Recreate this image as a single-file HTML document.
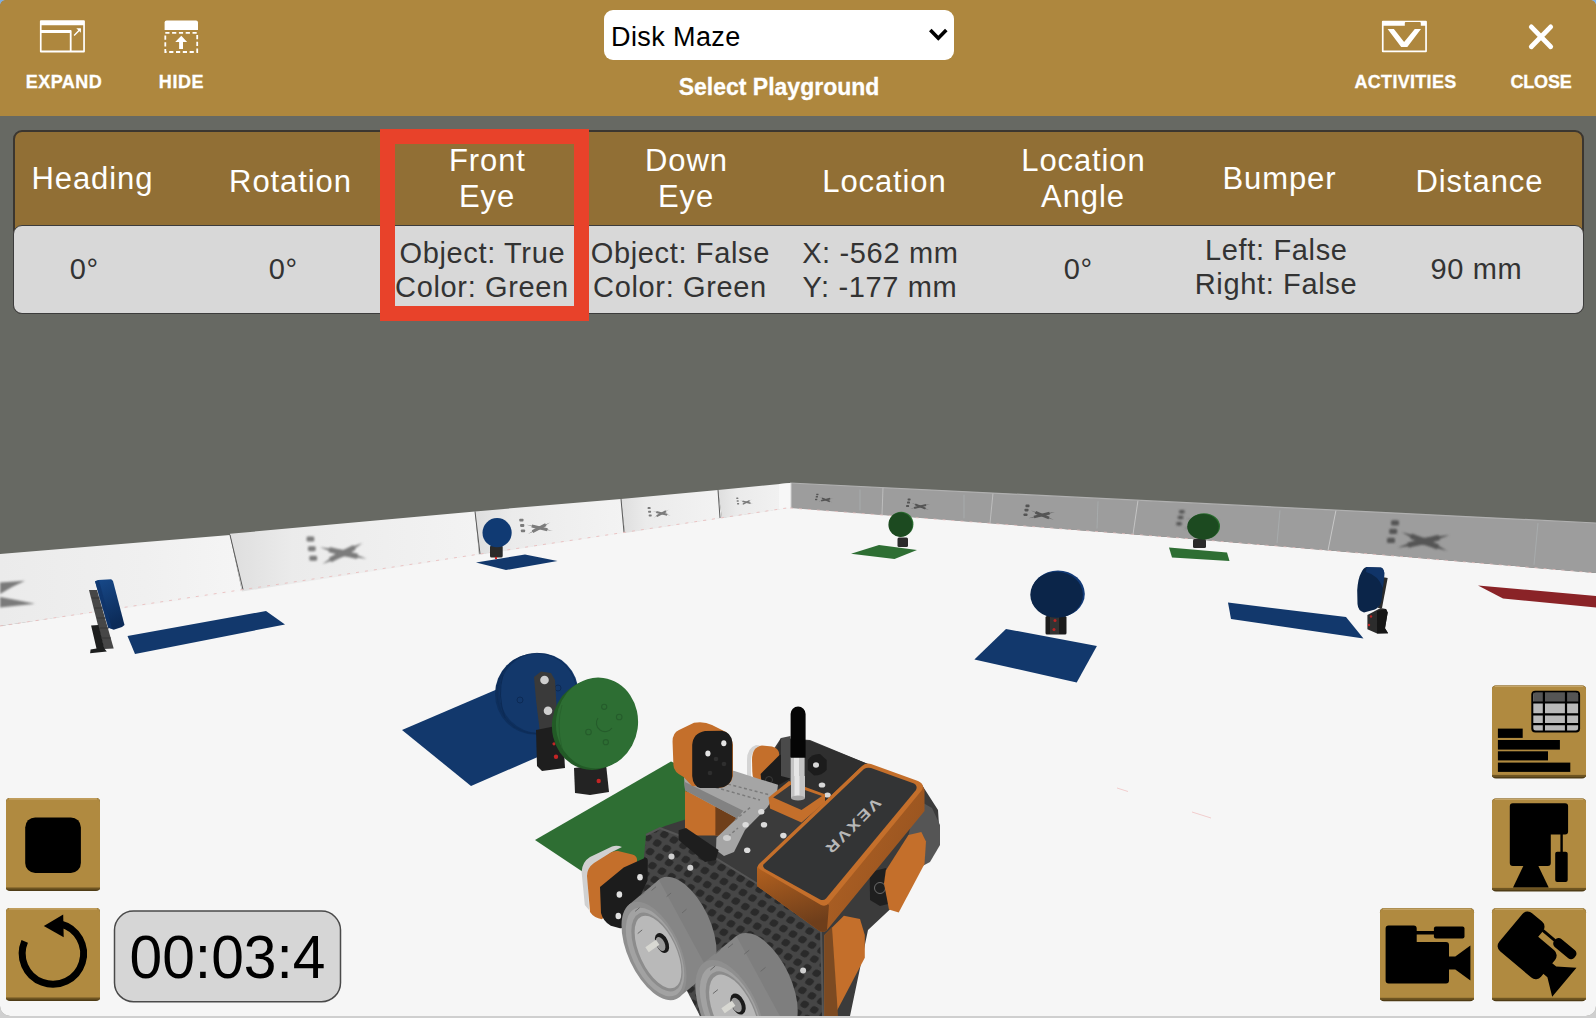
<!DOCTYPE html>
<html><head><meta charset="utf-8">
<style>
*{margin:0;padding:0;box-sizing:border-box}
html,body{width:1596px;height:1018px;overflow:hidden;background:#7eaee0;font-family:"Liberation Sans",sans-serif}
#app{position:absolute;left:0;top:0;width:1596px;height:1018px;overflow:hidden;border-radius:6px 6px 0 0;background:#cfcfcf}
#scene{position:absolute;left:0;top:0;width:1596px;height:1016px;border-radius:0 0 10px 10px;overflow:hidden;background:#f6f6f6}
#hdr{position:absolute;left:0;top:0;width:1596px;height:116px;background:#ae873e}
.lbl{position:absolute;color:#fff;font-weight:bold;font-size:18px;line-height:18px;text-align:center;white-space:nowrap;-webkit-text-stroke:0.3px #fff}
#sel{position:absolute;left:604px;top:10px;width:350px;height:50px;background:#fff;border-radius:9px}
#sel span{position:absolute;left:7px;top:11px;font-size:27px;line-height:32px;color:#000;letter-spacing:0.4px}
#tbl{position:absolute;left:13px;top:130px;width:1571px;height:184px;border:2px solid #3b3630;border-radius:9px;background:#916f35}
#th{position:absolute;left:-2px;top:92.5px;width:1571px;height:89.5px;background:#d8d8d8;border:1.8px solid #3c3c3c;border-radius:9px}
.h{position:absolute;color:#fff;font-size:31px;line-height:36px;letter-spacing:0.9px;text-indent:0.9px;text-align:center;width:200px;white-space:nowrap}
.b{position:absolute;color:#333;font-size:29px;line-height:34px;letter-spacing:0.65px;text-indent:0.65px;text-align:center;width:200px;white-space:nowrap}
.btn{position:absolute;width:94px;height:94px;border-radius:5px;background:#b08a40;box-shadow:inset 0 -5px 3px -1px #5b4419}
</style></head><body>
<div id="app">
<div id="scene">
<svg id="world" width="1596" height="1018" style="position:absolute;left:0;top:0">
<defs><filter id="bl1" x="-30%" y="-30%" width="160%" height="160%"><feGaussianBlur stdDeviation="1.3"/></filter><filter id="bl2" x="-30%" y="-30%" width="160%" height="160%"><feGaussianBlur stdDeviation="0.7"/></filter><linearGradient id="lw1" x1="0" y1="0" x2="1" y2="0"><stop offset="0" stop-color="#ebebeb"/><stop offset="0.6" stop-color="#f0f0f0"/><stop offset="1" stop-color="#f5f5f5"/></linearGradient><linearGradient id="lw2" x1="0" y1="0" x2="1" y2="0"><stop offset="0" stop-color="#dedede"/><stop offset="0.25" stop-color="#ebebeb"/><stop offset="1" stop-color="#f3f3f3"/></linearGradient><linearGradient id="btn" x1="0" y1="0" x2="0" y2="1"><stop offset="0" stop-color="#b18b41"/><stop offset="1" stop-color="#ad873e"/></linearGradient></defs>
<rect x="0" y="0" width="1596" height="1018" fill="#676963"/>
<polygon points="0,626 790,507.5 1180,538 1596,573 1596,1018 0,1018" fill="#f6f6f6"/>
<polygon points="0.0,554.0 230.0,535.0 242.0,591.5 0.0,626.0" fill="url(#lw1)"/>
<polygon points="230.0,533.8 475.0,511.4 479.0,554.8 242.0,591.5" fill="url(#lw2)"/>
<polygon points="475.0,511.4 621.0,499.0 625.0,532.9 479.0,554.8" fill="url(#lw2)"/>
<polygon points="621.0,499.0 718.0,490.0 722.0,518.3 625.0,532.9" fill="url(#lw2)"/>
<polygon points="718.0,490.0 790.0,483.0 794.0,507.5 722.0,518.3" fill="url(#lw2)"/>
<line x1="230" y1="535.0" x2="243" y2="589.5" stroke="#5a5a5a" stroke-width="1"/>
<line x1="475" y1="511.4" x2="480" y2="554.0" stroke="#5a5a5a" stroke-width="1"/>
<line x1="621" y1="499.0" x2="624" y2="532.4" stroke="#5a5a5a" stroke-width="1"/>
<line x1="718" y1="490.0" x2="720" y2="518.0" stroke="#5a5a5a" stroke-width="1"/>
<polygon points="790,483 1596,523 1596,573 1180,538 790,508" fill="#9d9d9d"/>
<line x1="883" y1="487.6" x2="882" y2="515.1" stroke="#bdbdbd" stroke-width="1"/>
<line x1="993" y1="493.1" x2="990" y2="523.4" stroke="#bdbdbd" stroke-width="1"/>
<line x1="1138" y1="500.3" x2="1133" y2="534.4" stroke="#c4c4c4" stroke-width="1"/>
<line x1="1336" y1="510.1" x2="1328" y2="550.5" stroke="#c8c8c8" stroke-width="1"/>
<line x1="860" y1="489.5" x2="860" y2="510.4" stroke="#a9aeb0" stroke-width="0.8"/>
<line x1="964" y1="494.6" x2="964" y2="518.4" stroke="#a9aeb0" stroke-width="0.8"/>
<line x1="1098" y1="501.3" x2="1097" y2="528.6" stroke="#a9aeb0" stroke-width="0.8"/>
<line x1="1280" y1="510.3" x2="1277" y2="543.2" stroke="#a9aeb0" stroke-width="0.8"/>
<line x1="1538" y1="523.1" x2="1534" y2="564.8" stroke="#a9aeb0" stroke-width="0.8"/>
<polyline points="790,483 1596,523" stroke="#b0b0b0" stroke-width="1.2" fill="none"/>
<polygon points="779,484 791,483 791,508 779,509" fill="#f7f7f7"/>
<line x1="791" y1="483" x2="791" y2="508" stroke="#d0d0d0" stroke-width="1"/>
<line x1="0" y1="626" x2="790" y2="507.5" stroke="#e8b8b8" stroke-width="0.8" stroke-dasharray="3,6"/>
<polyline points="790,508 1180,538 1596,573" stroke="#e8c0c0" stroke-width="0.8" stroke-dasharray="3,6" fill="none"/>
<filter id="bl3" x="-30%" y="-30%" width="160%" height="160%"><feGaussianBlur stdDeviation="0.9"/></filter>
<g filter="url(#bl1)" fill="#7a7a7a"><polygon points="0,582.5 25,580.8 12,587 0,594"/><polygon points="0,597 16,600 35,603.8 0,607.5"/></g>
<g filter="url(#bl3)"><polygon points="319.8,547.3 342.5,556.0 366.8,558.7 344.0,549.9" fill="#7b7b7b"/><line x1="329.2" y1="549.6" x2="357.4" y2="556.4" stroke="#7b7b7b" stroke-width="5.4"/><polygon points="362.5,543.1 341.0,550.8 322.3,564.1 343.9,556.4" fill="#7b7b7b"/><line x1="354.5" y1="547.3" x2="330.3" y2="559.9" stroke="#7b7b7b" stroke-width="5.4"/><rect x="306.6" y="536.6" width="7.7" height="5.0" rx="1.4" fill="#7b7b7b"/><rect x="308.0" y="546.2" width="7.7" height="5.0" rx="1.4" fill="#7b7b7b"/><rect x="309.4" y="555.8" width="7.7" height="5.0" rx="1.4" fill="#7b7b7b"/></g>
<g filter="url(#bl2)"><polygon points="526.6,524.7 539.4,528.8 552.6,531.0 539.8,526.9" fill="#7b7b7b"/><line x1="531.8" y1="526.0" x2="547.4" y2="529.7" stroke="#7b7b7b" stroke-width="3.0"/><polygon points="550.2,522.4 538.7,527.3 528.0,534.0 539.6,529.0" fill="#7b7b7b"/><line x1="545.8" y1="524.7" x2="532.5" y2="531.6" stroke="#7b7b7b" stroke-width="3.0"/><rect x="519.3" y="518.8" width="4.2" height="2.8" rx="0.8" fill="#7b7b7b"/><rect x="520.1" y="524.1" width="4.2" height="2.8" rx="0.8" fill="#7b7b7b"/><rect x="520.9" y="529.4" width="4.2" height="2.8" rx="0.8" fill="#7b7b7b"/></g>
<g filter="url(#bl2)"><polygon points="652.7,511.2 661.6,513.9 670.8,515.6 661.8,513.0" fill="#7b7b7b"/><line x1="656.3" y1="512.1" x2="667.2" y2="514.7" stroke="#7b7b7b" stroke-width="2.1"/><polygon points="669.1,509.6 661.2,513.2 653.6,517.7 661.6,514.0" fill="#7b7b7b"/><line x1="666.0" y1="511.2" x2="656.7" y2="516.1" stroke="#7b7b7b" stroke-width="2.1"/><rect x="647.6" y="507.1" width="3.0" height="1.9" rx="0.6" fill="#7b7b7b"/><rect x="648.1" y="510.8" width="3.0" height="1.9" rx="0.6" fill="#7b7b7b"/><rect x="648.7" y="514.5" width="3.0" height="1.9" rx="0.6" fill="#7b7b7b"/></g>
<g filter="url(#bl2)"><polygon points="739.9,500.6 746.4,502.5 753.1,503.8 746.6,502.0" fill="#7b7b7b"/><line x1="742.5" y1="501.3" x2="750.5" y2="503.2" stroke="#7b7b7b" stroke-width="1.5"/><polygon points="751.9,499.4 746.1,502.2 740.6,505.3 746.4,502.6" fill="#7b7b7b"/><line x1="749.6" y1="500.6" x2="742.9" y2="504.2" stroke="#7b7b7b" stroke-width="1.5"/><rect x="736.2" y="497.6" width="2.2" height="1.4" rx="0.4" fill="#7b7b7b"/><rect x="736.6" y="500.3" width="2.2" height="1.4" rx="0.4" fill="#7b7b7b"/><rect x="737.0" y="503.0" width="2.2" height="1.4" rx="0.4" fill="#7b7b7b"/></g>
<g filter="url(#bl2)"><polygon points="819.4,497.1 825.8,500.1 832.4,502.5 826.0,499.5" fill="#555555"/><line x1="822.0" y1="498.2" x2="829.8" y2="501.4" stroke="#555555" stroke-width="1.6"/><polygon points="833.2,497.9 825.6,499.5 818.1,501.6 825.7,500.0" fill="#555555"/><line x1="830.2" y1="498.6" x2="821.1" y2="500.8" stroke="#555555" stroke-width="1.6"/><rect x="816.2" y="493.7" width="2.3" height="1.5" rx="0.4" fill="#555555"/><rect x="815.7" y="496.1" width="2.3" height="1.5" rx="0.4" fill="#555555"/><rect x="815.0" y="498.7" width="2.3" height="1.5" rx="0.4" fill="#555555"/></g>
<g filter="url(#bl2)"><polygon points="911.8,503.0 920.2,507.0 928.9,510.0 920.6,506.0" fill="#555555"/><line x1="915.2" y1="504.4" x2="925.5" y2="508.6" stroke="#555555" stroke-width="2.1"/><polygon points="929.9,504.0 919.9,505.9 910.2,508.8 920.2,506.9" fill="#555555"/><line x1="926.0" y1="505.0" x2="914.1" y2="507.9" stroke="#555555" stroke-width="2.1"/><rect x="907.6" y="498.4" width="3.0" height="2.0" rx="0.6" fill="#555555"/><rect x="907.0" y="501.6" width="3.0" height="2.0" rx="0.6" fill="#555555"/><rect x="906.1" y="505.1" width="3.0" height="2.0" rx="0.6" fill="#555555"/></g>
<g filter="url(#bl2)"><polygon points="1031.0,510.6 1041.9,516.0 1053.5,519.8 1042.5,514.4" fill="#555555"/><line x1="1035.5" y1="512.4" x2="1049.0" y2="518.0" stroke="#555555" stroke-width="2.8"/><polygon points="1054.8,512.0 1041.5,514.3 1028.8,518.2 1042.0,515.9" fill="#555555"/><line x1="1049.6" y1="513.2" x2="1034.0" y2="517.0" stroke="#555555" stroke-width="2.8"/><rect x="1025.5" y="504.6" width="4.0" height="2.6" rx="0.8" fill="#555555"/><rect x="1024.5" y="508.8" width="4.0" height="2.6" rx="0.8" fill="#555555"/><rect x="1023.5" y="513.4" width="4.0" height="2.6" rx="0.8" fill="#555555"/></g>
<g filter="url(#bl3)"><polygon points="1186.7,518.2 1201.6,526.0 1217.7,530.8 1202.8,523.0" fill="#555555"/><line x1="1192.9" y1="520.7" x2="1211.5" y2="528.3" stroke="#555555" stroke-width="3.9"/><polygon points="1219.5,520.0 1201.2,522.8 1183.6,528.7 1202.0,525.9" fill="#555555"/><line x1="1212.3" y1="521.8" x2="1190.8" y2="527.0" stroke="#555555" stroke-width="3.9"/><rect x="1179.1" y="509.9" width="5.5" height="3.6" rx="1.0" fill="#555555"/><rect x="1177.8" y="515.7" width="5.5" height="3.6" rx="1.0" fill="#555555"/><rect x="1176.3" y="521.9" width="5.5" height="3.6" rx="1.0" fill="#555555"/></g>
<g filter="url(#bl3)"><polygon points="1402.0,532.3 1423.2,544.7 1447.0,550.7 1425.8,538.3" fill="#555555"/><line x1="1411.0" y1="536.0" x2="1438.0" y2="547.0" stroke="#555555" stroke-width="5.6"/><polygon points="1449.6,535.0 1422.8,538.0 1397.6,547.6 1424.4,544.6" fill="#555555"/><line x1="1439.2" y1="537.5" x2="1408.0" y2="545.1" stroke="#555555" stroke-width="5.6"/><rect x="1391.0" y="520.3" width="8.0" height="5.2" rx="1.5" fill="#555555"/><rect x="1389.2" y="528.7" width="8.0" height="5.2" rx="1.5" fill="#555555"/><rect x="1387.0" y="537.8" width="8.0" height="5.2" rx="1.5" fill="#555555"/></g>
<polygon points="127.5,636 266,611 285,624.5 135,654" fill="#12386c"/>
<polygon points="476,562.5 525,554.5 557.5,561 506,570" fill="#12386c"/>
<polygon points="851,553.7 879,545 917,550 894.5,559" fill="#2e6e33"/>
<polygon points="1169,547.5 1227,552.5 1229.5,561 1172,557.5" fill="#2e6e33"/>
<polygon points="974.4,659.4 1006,629 1096.9,645.9 1076.7,682.5" fill="#12386c"/>
<polygon points="1228,602.6 1346,617 1363.5,638.4 1231,619" fill="#12386c"/>
<polygon points="1478,585.5 1596,596 1596,607.6 1503,598.5" fill="#8a2327"/>
<polygon points="402,730 521,679 600,730 471,786" fill="#12386c"/>
<polygon points="535,840 671,761.5 760,800 640,900 586,874" fill="#2e6e33"/>
<polygon points="89,590 97,590 113.7,648.4 104,649" fill="#474747"/>
<path d="M92,598 L100,598 M94,608 L103,608 M97,618 L106,618 M100,628 L109,628 M102,638 L111,638" stroke="#333" stroke-width="0.8"/>
<polygon points="91.1,625.4 98.5,624.9 104.3,648.4 106.8,651.4 90.1,653.3 90.6,649.4 96.5,648.4" fill="#1d1e1e"/>
<defs><linearGradient id="fd" x1="0" y1="0" x2="0.3" y2="1"><stop offset="0" stop-color="#17498a"/><stop offset="1" stop-color="#0c2b58"/></linearGradient></defs>
<polygon points="95,581.2 98,580 111.2,579.2 113,581 124.5,624.9 122,627 113.7,629.8 108.3,627.8" fill="url(#fd)"/>
<polygon points="95,581.2 99,580.5 112,628.5 108.3,627.8" fill="#0f356b" opacity="0.8"/>
<rect x="490" y="545.5" width="12.7" height="12" rx="1.5" fill="#2a2a2a"/>
<circle cx="497.1" cy="532.7" r="14.6" fill="#103a73"/>
<circle cx="496" cy="558" r="1.2" fill="#c22"/>
<rect x="897.5" y="537.5" width="10.5" height="9.5" rx="1.5" fill="#2a2a2a"/>
<ellipse cx="901.2" cy="524.2" rx="12.2" ry="12.5" fill="#2a6e2f"/>
<ellipse cx="900.4" cy="524.7" rx="12" ry="12.2" fill="#1c4a20"/>
<rect x="1193" y="539" width="13" height="9" rx="1.5" fill="#2a2a2a"/>
<ellipse cx="1204" cy="526.2" rx="16" ry="13" fill="#2a6e2f"/>
<ellipse cx="1203" cy="526.7" rx="15.8" ry="12.8" fill="#1c4a20"/>
<rect x="1045.5" y="616" width="21" height="18.5" rx="1.5" fill="#1c1c1c"/>
<rect x="1050" y="617" width="9" height="17" fill="#333"/>
<circle cx="1055" cy="620.6" r="1.5" fill="#b22"/><circle cx="1054" cy="629.5" r="1.5" fill="#b22"/>
<ellipse cx="1058" cy="593.9" rx="26.8" ry="23.4" fill="#123a76"/>
<ellipse cx="1056.6" cy="594.8" rx="26.3" ry="23" fill="#0b2549"/>
<polygon points="1367.4,615 1380.6,608 1386,608.9 1387.7,612.4 1385,628.3 1388.1,633.2 1377.1,633.6 1367.4,629.2" fill="#2c2c2c"/>
<polygon points="1377,611 1386,608.9 1387.7,612.4 1385,628.3 1388.1,633.2 1377.1,633.6" fill="#161616"/>
<circle cx="1371" cy="616.5" r="1.2" fill="#b22"/><circle cx="1369" cy="625" r="1.2" fill="#b22"/>
<polygon points="1382.4,577 1387.7,578 1382,608 1378,608" fill="#2a2a2a"/>
<path d="M1366.5,566.9 L1381,567.5 Q1385,569 1384.2,576 L1381.5,601 Q1380,607 1375,609.5 L1364,612.4 Q1358,611 1357.5,604 L1357.2,590.3 Q1358,578 1361.2,572.7 Q1363,568 1366.5,566.9 Z" fill="#0b2549"/>
<path d="M1366.5,566.9 L1381,567.5 Q1385,569 1384.2,576 L1383,588 Q1378,575 1366,572 Z" fill="#123a76" opacity="0.7"/>
<ellipse cx="535" cy="694" rx="40" ry="40.5" fill="#0e2f5d"/>
<ellipse cx="539" cy="693" rx="39.5" ry="40" fill="#13386b"/>
<ellipse cx="537" cy="693.5" rx="40" ry="40.2" fill="none" stroke="#0d2c58" stroke-width="0.8"/>
<g fill="none" stroke="#0c2a55" stroke-width="1"><circle cx="520" cy="700" r="3"/><circle cx="558" cy="688" r="3"/><path d="M503,675 Q497,695 505,718"/></g>
<polygon points="534,677 541,671.5 551,673 555,680 558,730 540,733 536,700" fill="#3a3a3a"/>
<circle cx="544.5" cy="680" r="4.3" fill="#cfcfcf"/><circle cx="548" cy="710.8" r="4.3" fill="#cfcfcf"/>
<polygon points="536,730 556,726 563,733 565,768 542,771 537,766" fill="#1e1e1e"/>
<circle cx="556" cy="756.7" r="2.2" fill="#c42525"/><circle cx="554" cy="743.8" r="1.6" fill="#c42525"/>
<polygon points="574,768 606,764 609,792 590,795 575,793" fill="#232323"/>
<circle cx="598.7" cy="781" r="2.2" fill="#c42525"/>
<ellipse cx="593" cy="725" rx="41" ry="45" transform="rotate(8 593 725)" fill="#225a26"/>
<ellipse cx="597" cy="723" rx="41" ry="45.5" transform="rotate(8 597 723)" fill="#2d6e33"/>
<g fill="none" stroke="#24592a" stroke-width="1.1" opacity="0.85"><path d="M598,718 A8,8 0 1 0 612,728"/><circle cx="604.2" cy="706.8" r="2.6"/><circle cx="619.2" cy="717" r="2.8"/><circle cx="588.5" cy="732" r="2.8"/><circle cx="605.8" cy="742.2" r="2.6"/></g>
<path d="M562,705 Q556,725 562,748" fill="none" stroke="#28632d" stroke-width="1"/>
<line x1="1117" y1="788" x2="1128" y2="791.5" stroke="#f0c8c8" stroke-width="0.9"/><line x1="1192" y1="812" x2="1211" y2="818" stroke="#f0c8c8" stroke-width="0.9"/>
<defs><pattern id="holes" width="11" height="11" patternUnits="userSpaceOnUse" patternTransform="rotate(30) skewX(-10)"><rect width="11" height="11" fill="#464646"/><rect x="1.8" y="1.8" width="7.4" height="7.4" rx="3" fill="#2a2a2a"/></pattern></defs>
<polygon points="646,835 665,826 690,818 745,800 760,770 781,738 810,740 868,764 922,785 938,810 940,840 928,858 900,900 868,930 850,1016 700,1016 680,960 646,900" fill="#3b3b3b"/>
<polygon points="918,800 932,808 940,825 940,845 930,862 915,870 905,850 912,820" fill="#555"/>
<polygon points="760,790 781,738 810,741 868,764 830,800 800,818 770,808" fill="#2f2f2f"/>
<path d="M747,760 Q747,748 756,745 L760,745.5 Q751,750 751,760 L751,778 L747,778 Z" fill="#d4d4d4"/>
<path d="M752,760 Q752,747 762,745.6 L772,746.5 Q779.5,748 779.5,756 L779.5,772 Q777,781 768,781.8 L758,781.8 Q752.5,780 752.3,772 Z" fill="#c46f2b"/>
<path d="M760.6,774 L779.5,755 Q786,754 790.5,759.7 L790.5,778.6 L773.2,788 Q764,788 761.4,781.8 Z" fill="#1c1c1c"/>
<circle cx="769" cy="780" r="3.5" fill="none" stroke="#3a3a3a" stroke-width="1"/>
<path d="M807.8,760 Q812,753.5 820,754 L826.7,760 L826.7,770 Q822,775.5 814,775.5 L807.8,770 Z" fill="#1c1c1c"/>
<ellipse cx="816" cy="765" rx="3" ry="2.8" fill="#d8d8d8"/>
<polygon points="781,738 790.5,736 790.5,778.6 781,776" fill="#4a4a4a"/>
<ellipse cx="822" cy="785" rx="3.3" ry="2.6" fill="#d8d8d8"/>
<ellipse cx="827.5" cy="795" rx="3.3" ry="2.6" fill="#d8d8d8"/>
<polygon points="685,791 715.4,800 737,812 737,829 728,835.6 690,835.6 685,830" fill="#c46f2b"/>
<polygon points="715.4,800 737,812 737,829 728,835.6 715.4,835.6" fill="#6f3f1a"/>
<polygon points="684,777.3 733.7,770.8 778,784.8 777,792.4 767.2,807.5 745,830 734,852 724,856 716,850 716.4,837.8 737,818.3 685.1,790.2" fill="#a5a5a5"/>
<polygon points="684,781.6 743.4,810.8 737,818.3 685.1,790.2" fill="#828282"/>
<path d="M712,780 L770,795 M700,783 L760,800 M735,820 L752,806 M724,840 L738,828" stroke="#7a7a7a" stroke-width="1.4" stroke-dasharray="3,2.5"/>
<ellipse cx="761.3" cy="811.8" rx="3.2" ry="2.8" fill="#dcdcdc"/>
<ellipse cx="745.6" cy="824.8" rx="3.2" ry="2.8" fill="#dcdcdc"/>
<ellipse cx="764" cy="824.8" rx="3.2" ry="2.8" fill="#dcdcdc"/>
<ellipse cx="783.4" cy="835.6" rx="3.2" ry="2.8" fill="#dcdcdc"/>
<ellipse cx="747.2" cy="850.2" rx="3.2" ry="2.8" fill="#dcdcdc"/>
<ellipse cx="727" cy="838" rx="4" ry="3" fill="#cfcfcf"/>
<path d="M672.6,743 Q672,733 679,729.9 L694,722.8 Q704,721 712,725 L726,732 Q732,737 733,745 L733,776 Q731,786 720,788 L692,786 L683.6,777 Q673.4,772 673.4,765 Z" fill="#c46f2b"/>
<path d="M692.2,745 Q693,733 705,731 L722,730.7 Q731,732 732.3,742 L732.3,776 Q731,787 718,788 L700,788 Q693,786 692.2,776 Z" fill="#1c1c1c"/>
<ellipse cx="707.9" cy="753.5" rx="2.6" ry="3" fill="#e4e4e4"/>
<ellipse cx="723.8" cy="743.2" rx="2.6" ry="3" fill="#e4e4e4"/>
<circle cx="716" cy="759" r="2.3" fill="#2e2e2e"/>
<circle cx="724" cy="764" r="2.3" fill="#2e2e2e"/>
<circle cx="710" cy="773" r="2.3" fill="#2e2e2e"/>
<rect x="790.6" y="757" width="14" height="41" fill="#c4c4c4"/><rect x="794" y="757" width="5" height="41" fill="#e6e6e6"/>
<path d="M790.6,757.7 V714 a7.5,7.5 0 0 1 15,0 V757.7 z" fill="#050505"/>
<polygon points="768.5,797.5 789,781 825,794.3 825,802.2 801.5,822.6 770,808.5" fill="#c46f2b"/>
<polygon points="773.2,797.5 790.5,785 822,796 801.5,810" fill="#3a3a3a"/>
<rect x="791" y="776" width="14" height="22" fill="#c4c4c4"/><rect x="794.5" y="776" width="5" height="22" fill="#e6e6e6"/>
<ellipse cx="798" cy="798" rx="7" ry="2.5" fill="#a8a8a8"/>
<polygon points="646,835 660,828 678,835 813,918 821,930 823,1016 700,1016 640,900" fill="url(#holes)"/>
<polyline points="646,835 660,828 678,835 813,918 821,930 823,1016" fill="none" stroke="#555" stroke-width="2"/>
<ellipse cx="671.5" cy="856.4" rx="3" ry="3" fill="#d0d0d0"/>
<ellipse cx="690.3" cy="867.7" rx="3" ry="3" fill="#d0d0d0"/>
<ellipse cx="803.1" cy="970.4" rx="3" ry="3" fill="#d0d0d0"/>
<polygon points="678.6,830.2 686,828 718.6,850 716,860 705,862 678.6,840" fill="#1e1e1e"/>
<polygon points="869.7,872 886,868 892,903 880,906 870,900" fill="#1f1f1f"/>
<circle cx="880" cy="888" r="5.5" fill="none" stroke="#6a6a6a" stroke-width="1"/>
<polygon points="885.8,870.6 908.4,835 921.3,832 926,841.6 924.5,864 898.7,912.6 889,909.4 884,883.5" fill="#c46f2b"/>
<polygon points="824.5,935 843.9,915.8 860,919 864.8,935 864.8,957.7 834.2,1016 824.5,1016" fill="#c46f2b"/>
<polygon points="824.5,935 832,927 838,1016 824.5,1016" fill="#7c4a22"/>
<defs><linearGradient id="bf" x1="0" y1="0" x2="0.3" y2="1"><stop offset="0" stop-color="#b3611f"/><stop offset="1" stop-color="#6e3e1b"/></linearGradient><linearGradient id="br" x1="0" y1="0" x2="1" y2="0.4"><stop offset="0" stop-color="#c26c28"/><stop offset="1" stop-color="#9a5520"/></linearGradient></defs>
<path d="M757,867 L757,886 L818,930 Q823,934 827,930 L924.5,811 L924.5,790 Q923,784 918,782.5 L870,765 L860,768 Z" fill="url(#br)"/>
<path d="M757,867 L757,886 L818,930 Q823,934 827,930 L829,905 L825.5,903 L761.8,867 Z" fill="url(#bf)"/>
<path d="M759,864 L862,766 Q866,762.5 871,764 L918,781 Q925,784 922,790 L829,903 Q826,907 821,905 L761,870 Q756,867 759,864 Z" fill="#c46f2b"/>
<path d="M763.5,864.5 L864,769 Q867,767 871,768 L914,783.5 Q918,786 916,790 L826,898.5 Q823.5,901 820,899.5 L766,869.5 Q762,867 763.5,864.5 Z" fill="#333435"/>
<text x="0" y="0" transform="translate(849,823) rotate(135) scale(1,0.8)" font-family="Liberation Sans" font-weight="bold" font-size="18" fill="#b8b8b8" letter-spacing="2.5" text-anchor="middle">VEXVR</text>
<path d="M581.6,872 Q582,862 590,857 L612,846.5 Q617,845 622,847 L612,852 L592,866 Q588,870 588,878 L589,910 L584.8,905 Z" fill="#d0d0d0"/>
<path d="M587,876 Q587,868 594,863 L610.8,852.4 Q614,850.5 618,851 L632.4,854.5 Q638,856 637,862 L636,880 L602,919.3 Q594,918 590,912 Z" fill="#c46f2b"/>
<path d="M600,887 L623.7,867.5 L645.3,857.8 Q648,858 647.8,862 L647.5,880.5 L626,926 Q623,929 619,928 L610.8,925.8 Q603,921 601,912.9 Z" fill="#1c1c1c"/>
<ellipse cx="640" cy="877.2" rx="2.8" ry="3.3" fill="#e0e0e0"/>
<ellipse cx="619.4" cy="894.5" rx="2.8" ry="3.3" fill="#e0e0e0"/>
<ellipse cx="618.3" cy="916" rx="2.8" ry="3.3" fill="#e0e0e0"/>
<ellipse cx="684.0" cy="926.0" rx="26.0" ry="53.0" transform="rotate(-25 684.0 926.0)" fill="#7e7e7e"/><polygon points="628.9,904.7 658.9,879.7 709.1,972.3 679.1,997.3" fill="#868686"/><ellipse cx="654.0" cy="951.0" rx="26.0" ry="53.0" transform="rotate(-25 654.0 951.0)" fill="#8f8f8f"/><ellipse cx="655.0" cy="952.0" rx="23.4" ry="47.7" transform="rotate(-25 655.0 952.0)" fill="#a2a2a2"/><ellipse cx="657.0" cy="952.0" rx="20.3" ry="42.4" transform="rotate(-25 657.0 952.0)" fill="#8c8c8c"/><ellipse cx="658.0" cy="952.0" rx="18.2" ry="39.2" transform="rotate(-25 658.0 952.0)" fill="#b9b9b9"/><ellipse cx="662.0" cy="943.0" rx="6.2" ry="10.6" transform="rotate(-25 662.0 943.0)" fill="#1a1a1a"/><ellipse cx="660.5" cy="944.0" rx="4.2" ry="7.4" transform="rotate(-25 660.5 944.0)" fill="#9a9a9a"/><rect x="649.0" y="943.0" width="13" height="6" transform="rotate(-35 654 951)" fill="#d8d8d2"/><line x1="642.2" y1="929.9" x2="637.7" y2="933.6" stroke="#6a6a6a" stroke-width="1"/><line x1="639.6" y1="907.7" x2="635.1" y2="911.4" stroke="#6a6a6a" stroke-width="1"/><line x1="644.6" y1="892.1" x2="640.1" y2="895.8" stroke="#6a6a6a" stroke-width="1"/><line x1="656.0" y1="886.7" x2="651.5" y2="890.5" stroke="#6a6a6a" stroke-width="1"/><line x1="671.1" y1="893.0" x2="666.6" y2="896.7" stroke="#6a6a6a" stroke-width="1"/><line x1="686.5" y1="909.2" x2="682.0" y2="913.0" stroke="#6a6a6a" stroke-width="1"/>
<ellipse cx="763.0" cy="985.0" rx="28.0" ry="56.0" transform="rotate(-25 763.0 985.0)" fill="#7e7e7e"/><polygon points="703.4,963.1 736.4,936.1 789.6,1033.9 756.6,1060.9" fill="#868686"/><ellipse cx="730.0" cy="1012.0" rx="28.0" ry="56.0" transform="rotate(-25 730.0 1012.0)" fill="#8f8f8f"/><ellipse cx="731.0" cy="1013.0" rx="25.2" ry="50.4" transform="rotate(-25 731.0 1013.0)" fill="#a2a2a2"/><ellipse cx="733.0" cy="1013.0" rx="21.8" ry="44.8" transform="rotate(-25 733.0 1013.0)" fill="#8c8c8c"/><ellipse cx="734.0" cy="1013.0" rx="19.6" ry="41.4" transform="rotate(-25 734.0 1013.0)" fill="#b9b9b9"/><ellipse cx="738.0" cy="1004.0" rx="6.7" ry="11.2" transform="rotate(-25 738.0 1004.0)" fill="#1a1a1a"/><ellipse cx="736.5" cy="1005.0" rx="4.5" ry="7.8" transform="rotate(-25 736.5 1005.0)" fill="#9a9a9a"/><rect x="725.0" y="1004.0" width="13" height="6" transform="rotate(-35 730 1012)" fill="#d8d8d2"/><line x1="717.9" y1="989.6" x2="712.9" y2="993.6" stroke="#6a6a6a" stroke-width="1"/><line x1="715.2" y1="966.0" x2="710.3" y2="970.1" stroke="#6a6a6a" stroke-width="1"/><line x1="720.7" y1="949.4" x2="715.7" y2="953.5" stroke="#6a6a6a" stroke-width="1"/><line x1="733.0" y1="943.7" x2="728.0" y2="947.7" stroke="#6a6a6a" stroke-width="1"/><line x1="749.2" y1="950.2" x2="744.2" y2="954.2" stroke="#6a6a6a" stroke-width="1"/><line x1="765.6" y1="967.3" x2="760.6" y2="971.4" stroke="#6a6a6a" stroke-width="1"/>
<rect x="6" y="798" width="94" height="93" rx="4" fill="#4f3c16"/><rect x="6" y="798" width="94" height="90" rx="4" fill="#b08a40"/><rect x="6" y="883" width="94" height="5" fill="#b08a40"/><rect x="6" y="887.5" width="94" height="2" fill="#6e5522"/><rect x="9" y="798.3" width="88" height="1.3" fill="#d0b27a" opacity="0.7"/>
<rect x="25.2" y="817.4" width="55.7" height="55.6" rx="10" fill="#000"/>
<rect x="6" y="908" width="94" height="93" rx="4" fill="#4f3c16"/><rect x="6" y="908" width="94" height="90" rx="4" fill="#b08a40"/><rect x="6" y="993" width="94" height="5" fill="#b08a40"/><rect x="6" y="997.5" width="94" height="2" fill="#6e5522"/><rect x="9" y="908.3" width="88" height="1.3" fill="#d0b27a" opacity="0.7"/>
<path d="M24.7,941.4 A30.7,30.7 0 1 0 60.5,923.8" fill="none" stroke="#000" stroke-width="7"/>
<polygon points="43.8,926 63.2,914.6 63.7,937.3" fill="#000"/>
<rect x="114.5" y="911.1" width="226" height="90.6" rx="19" fill="#d6d6d6" stroke="#4a4a4a" stroke-width="1.5"/>
<text x="0" y="0" transform="translate(227.5,977.6) scale(0.955,1)" font-family="Liberation Sans" font-size="61.5" fill="#000" text-anchor="middle">00:03:4</text>
<rect x="1492" y="685.4" width="94" height="93" rx="4" fill="#4f3c16"/><rect x="1492" y="685.4" width="94" height="90" rx="4" fill="#b08a40"/><rect x="1492" y="770.4" width="94" height="5" fill="#b08a40"/><rect x="1492" y="774.9" width="94" height="2" fill="#6e5522"/><rect x="1495" y="685.6999999999999" width="88" height="1.3" fill="#d0b27a" opacity="0.7"/>
<rect x="1531.3" y="690.7" width="48.8" height="41.9" rx="4" fill="#000"/>
<rect x="1533.3" y="692.7" width="44.8" height="37.9" rx="2.5" fill="#b9b9b9"/>
<rect x="1533.3" y="692.7" width="44.8" height="9.5" fill="#555"/>
<path d="M1543.9,691 V732 M1566,691 V732 M1532,702.5 H1579 M1532,714.4 H1579 M1532,724.2 H1579" stroke="#000" stroke-width="2.2"/>
<rect x="1497.9" y="728.6" width="24.8" height="9.3" fill="#000"/>
<rect x="1497.9" y="740" width="62.0" height="9.6" fill="#000"/>
<rect x="1497.9" y="751.3" width="50.1" height="9.1" fill="#000"/>
<rect x="1497.9" y="762.6" width="72.4" height="9.3" fill="#000"/>
<rect x="1492" y="798.4" width="94" height="93" rx="4" fill="#4f3c16"/><rect x="1492" y="798.4" width="94" height="90" rx="4" fill="#b08a40"/><rect x="1492" y="883.4" width="94" height="5" fill="#b08a40"/><rect x="1492" y="887.9" width="94" height="2" fill="#6e5522"/><rect x="1495" y="798.6999999999999" width="88" height="1.3" fill="#d0b27a" opacity="0.7"/>
<path d="M1512.8,803.2 H1565.1 a3,3 0 0 1 3,3 V831.5 a3,3 0 0 1 -3,3 H1550.8 V862.9 a3,3 0 0 1 -3,3 H1512.8 a3,3 0 0 1 -3,-3 V806.2 a3,3 0 0 1 3,-3 z" fill="#000"/>
<polygon points="1523.8,865 1537.9,865 1548.7,887.5 1513,887.5" fill="#000"/>
<rect x="1560.4" y="834" width="2.4" height="19" fill="#000"/>
<rect x="1555.2" y="851.8" width="12.5" height="30.2" rx="2" fill="#000"/>
<rect x="1380" y="908.3" width="94" height="93" rx="4" fill="#4f3c16"/><rect x="1380" y="908.3" width="94" height="90" rx="4" fill="#b08a40"/><rect x="1380" y="993.3" width="94" height="5" fill="#b08a40"/><rect x="1380" y="997.8" width="94" height="2" fill="#6e5522"/><rect x="1383" y="908.5999999999999" width="88" height="1.3" fill="#d0b27a" opacity="0.7"/>
<path d="M1388.6,925.5 H1413.7 a3,3 0 0 1 3,3 V942 H1446 a3,3 0 0 1 3,3 V980.4 a3,3 0 0 1 -3,3 H1388.6 a3,3 0 0 1 -3,-3 V928.5 a3,3 0 0 1 3,-3 z" fill="#000"/><rect x="1416" y="931" width="18.5" height="3.5" fill="#000"/><rect x="1433.9" y="926.5" width="30.6" height="12.1" rx="2" fill="#000"/><polygon points="1449,956.5 1455.3,956.5 1470.4,945.5 1470.4,980.6 1455.3,969.6 1449,969.6" fill="#000"/>
<rect x="1492" y="908.3" width="94" height="93" rx="4" fill="#4f3c16"/><rect x="1492" y="908.3" width="94" height="90" rx="4" fill="#b08a40"/><rect x="1492" y="993.3" width="94" height="5" fill="#b08a40"/><rect x="1492" y="997.8" width="94" height="2" fill="#6e5522"/><rect x="1495" y="908.5999999999999" width="88" height="1.3" fill="#d0b27a" opacity="0.7"/>
<g transform="translate(1539,951) rotate(40) scale(0.86) translate(-1428,-954)"><path d="M1393.6,925.5 H1408.7 a8,8 0 0 1 8,8 V942 H1441 a8,8 0 0 1 8,8 V975.4 a8,8 0 0 1 -8,8 H1393.6 a8,8 0 0 1 -8,-8 V933.5 a8,8 0 0 1 8,-8 z" fill="#000"/><rect x="1416" y="931" width="18.5" height="3.5" fill="#000"/><rect x="1433.9" y="926.5" width="30.6" height="12.1" rx="5" fill="#000"/><polygon points="1447,955 1455,955 1474,941 1474,985 1455,971 1447,971" fill="#000"/></g>
</svg>
</div>
<div id="hdr">
<svg width="1596" height="115" style="position:absolute;left:0;top:0">
  <g fill="#fff">
    <!-- expand -->
    <path d="M40.9,20.3 h43 a1,1 0 0 1 1,1 v30.1 a1,1 0 0 1 -1,1 h-43 a1,1 0 0 1 -1,-1 v-30.1 a1,1 0 0 1 1,-1 z M41.6,25.2 v25.4 h41.6 v-25.4 z"/>
    <path d="M40.5,30 h30.1 a1,1 0 0 1 1,1 v21 h-1.8 v-18.9 h-29.3 z"/>
    <path d="M74.1,35.5 l6.2,-6.2" stroke="#fff" stroke-width="1.4"/>
    <path d="M76.3,28.2 h4.6 v4.6 z"/>
    <!-- hide -->
    <path d="M166.6,20.6 h29.4 a2,2 0 0 1 2,2 v7.4 h-33.4 v-7.4 a2,2 0 0 1 2,-2 z"/>
    <rect x="165.3" y="32.9" width="31.9" height="19.1" fill="none" stroke="#fff" stroke-width="1.8" stroke-dasharray="4.2,2.6"/>
    <path d="M181.3,35.8 l5.8,6.1 h-4.1 v7 h-3.9 v-7 h-3.9 z"/>
    <!-- activities -->
    <path d="M1382.9,20.7 h43 a1,1 0 0 1 1,1 v29.5 a1,1 0 0 1 -1,1 h-43 a1,1 0 0 1 -1,-1 v-29.5 a1,1 0 0 1 1,-1 z M1383.6,25.8 v24.7 h41.6 v-24.7 h-4.4 v-2.7 a1,1 0 0 0 -1,-1 h-14 a1,1 0 0 0 -1,1 v2.7 z"/>
    <path d="M1387.6,29 h6.3 l10.2,12.9 l10.7,-12.9 h6.2 l-13.7,17.9 h-6.1 z"/>
  </g>
  <path d="M1531.3,26.9 l19.4,19.9 M1550.7,26.9 l-19.4,19.9" stroke="#fff" stroke-width="4.8" stroke-linecap="round"/>
</svg>
  <div class="lbl" style="left:14px;top:73px;width:100px;letter-spacing:0.5px">EXPAND</div>
  <div class="lbl" style="left:131.5px;top:73px;width:100px;letter-spacing:0.6px">HIDE</div>
  <div id="sel"><span>Disk Maze</span><svg width="350" height="50" style="position:absolute;left:0;top:0"><path d="M326.3,20 l8,8.2 l8,-8.2" stroke="#000" stroke-width="3.6" fill="none"/></svg></div>
  <div class="lbl" style="left:629px;top:76px;width:300px;font-size:23px;line-height:23px">Select Playground</div>
  <div class="lbl" style="left:1330.5px;top:73px;width:150px;letter-spacing:0.3px">ACTIVITIES</div>
  <div class="lbl" style="left:1491px;top:73px;width:100px;letter-spacing:-0.2px">CLOSE</div>
</div>
<div id="tbl">
  <div id="th"></div>
</div>
<div class="h" style="left:-8px;top:161.3px">Heading</div>
<div class="h" style="left:190px;top:164.3px">Rotation</div>
<div class="h" style="left:387px;top:142.8px">Front<br>Eye</div>
<div class="h" style="left:586px;top:142.8px">Down<br>Eye</div>
<div class="h" style="left:784px;top:164.3px">Location</div>
<div class="h" style="left:983px;top:142.8px">Location<br>Angle</div>
<div class="h" style="left:1179px;top:161.3px">Bumper</div>
<div class="h" style="left:1379px;top:164.3px">Distance</div>
<div class="b" style="left:-16px;top:252.2px">0°</div>
<div class="b" style="left:183px;top:252.2px">0°</div>
<div class="b" style="left:382px;top:235.8px">Object: True<br>Color: Green</div>
<div class="b" style="left:580px;top:235.8px">Object: False<br>Color: Green</div>
<div class="b" style="left:780px;top:235.8px">X: -562 mm<br>Y: -177 mm</div>
<div class="b" style="left:978px;top:252.2px">0°</div>
<div class="b" style="left:1176px;top:232.9px">Left: False<br>Right: False</div>
<div class="b" style="left:1376px;top:251.5px">90 mm</div>
<div id="redbox" style="position:absolute;left:380px;top:129px;width:209px;height:192px;border:15px solid #e8422a"></div>
</div>
</body></html>
